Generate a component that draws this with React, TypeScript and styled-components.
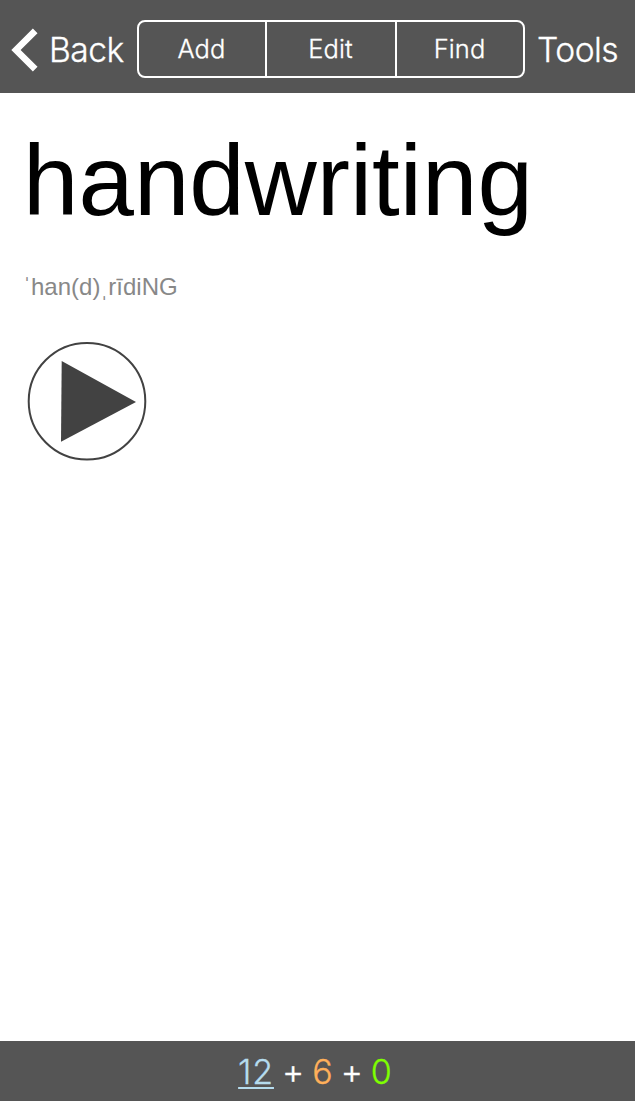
import React from "react";
import styled, { createGlobalStyle } from "styled-components";

const GlobalStyle = createGlobalStyle`
  * { box-sizing: border-box; }
  body { margin: 0; background: #fff; }
`;

const Screen = styled.div`
  width: 635px;
  height: 1101px;
  display: flex;
  flex-direction: column;
  background: #fff;
  font-family: Inter, "Liberation Sans", sans-serif;
`;

const Toolbar = styled.header`
  height: 93px;
  display: flex;
  align-items: flex-start;
  padding: 20px 0 0 11px;
  background: #555;
  color: #fff;
  -webkit-text-stroke: 0.3px currentColor;
`;

const NavButton = styled.button<{ $width: number }>`
  width: ${(p) => p.$width}px;
  height: 58px;
  padding: 1px 0 0;
  border: 0;
  background: none;
  color: inherit;
  display: flex;
  align-items: center;
  font: 300 33.6px/57px Inter, sans-serif;
  letter-spacing: -0.5px;
  white-space: nowrap;
`;

const BackIcon = styled.svg`
  width: 27px;
  height: 44px;
  margin-right: 11px;
  flex: none;
`;

const Segments = styled.div`
  width: 388px;
  height: 58px;
  display: grid;
  grid-template-columns: 126px 130px 128px;
  margin-right: 12px;
  border: 2px solid #fff;
  border-radius: 8px;
`;

const Segment = styled.button`
  padding: 0 1px 0 0;
  border: 0;
  background: none;
  color: inherit;
  font: 300 25.5px/54px Inter, sans-serif;
  letter-spacing: 0.1px;
  & + & { border-left: 2px solid #fff; }
`;

const Card = styled.main`
  flex: 1;
  padding: 30px 23px 0;
  font-family: "Liberation Sans", Arial, sans-serif;
`;

const Word = styled.h1`
  margin: 0;
  font-size: 99.7px;
  line-height: 115px;
  font-weight: 400;
  color: #000;
`;

const Phonetic = styled.p`
  margin: 35px 0 0;
  font-size: 24px;
  line-height: 28px;
  color: #888;
`;

const PlayButton = styled.button`
  display: block;
  width: 120px;
  height: 120px;
  margin: 40px 0 0 4px;
  padding: 0;
  border: 0;
  background: none;
`;

const Counts = styled.footer`
  height: 60px;
  display: flex;
  justify-content: center;
  gap: 8px;
  padding: 1px 5px 0 0;
  background: #555;
  color: #fff;
  font-weight: 300;
  font-size: 34px;
  line-height: 60px;
  -webkit-text-stroke: 0.3px currentColor;
`;

const Count = styled.span<{ $color: string; $active?: boolean }>`
  color: ${(p) => p.$color};
  text-decoration: ${(p) => (p.$active ? "underline" : "none")};
  text-decoration-thickness: 2px;
  text-underline-offset: 3px;
  letter-spacing: ${(p) => (p.$active ? "0.8px" : "0")};
`;

export default function App() {
  return (
    <Screen>
      <GlobalStyle />
      <Toolbar>
        <NavButton $width={126}>
          <BackIcon viewBox="0 0 27 44">
            <path d="M24.200 2.800 5 22l19.200 19.200" fill="none" stroke="#fff" strokeWidth="6.6" />
          </BackIcon>
          Back
        </NavButton>
        <Segments>
          <Segment>Add</Segment>
          <Segment>Edit</Segment>
          <Segment>Find</Segment>
        </Segments>
        <NavButton $width={90}>Tools</NavButton>
      </Toolbar>
      <Card>
        <Word>handwriting</Word>
        <Phonetic>ˈhan(d)ˌrīdiNG</Phonetic>
        <PlayButton aria-label="Play">
          <svg width="120" height="120" viewBox="0 0 120 120">
            <circle cx="60" cy="60.300" r="58.300" fill="none" stroke="#424242" strokeWidth="2" />
            <path d="M34.700 20 109 60.900 34 100.700Z" fill="#424242" />
          </svg>
        </PlayButton>
      </Card>
      <Counts>
        <Count $color="#b5dcee" $active>12</Count>
        <span>+</span>
        <Count $color="#ffb05a">6</Count>
        <span>+</span>
        <Count $color="#7fff00">0</Count>
      </Counts>
    </Screen>
  );
}
